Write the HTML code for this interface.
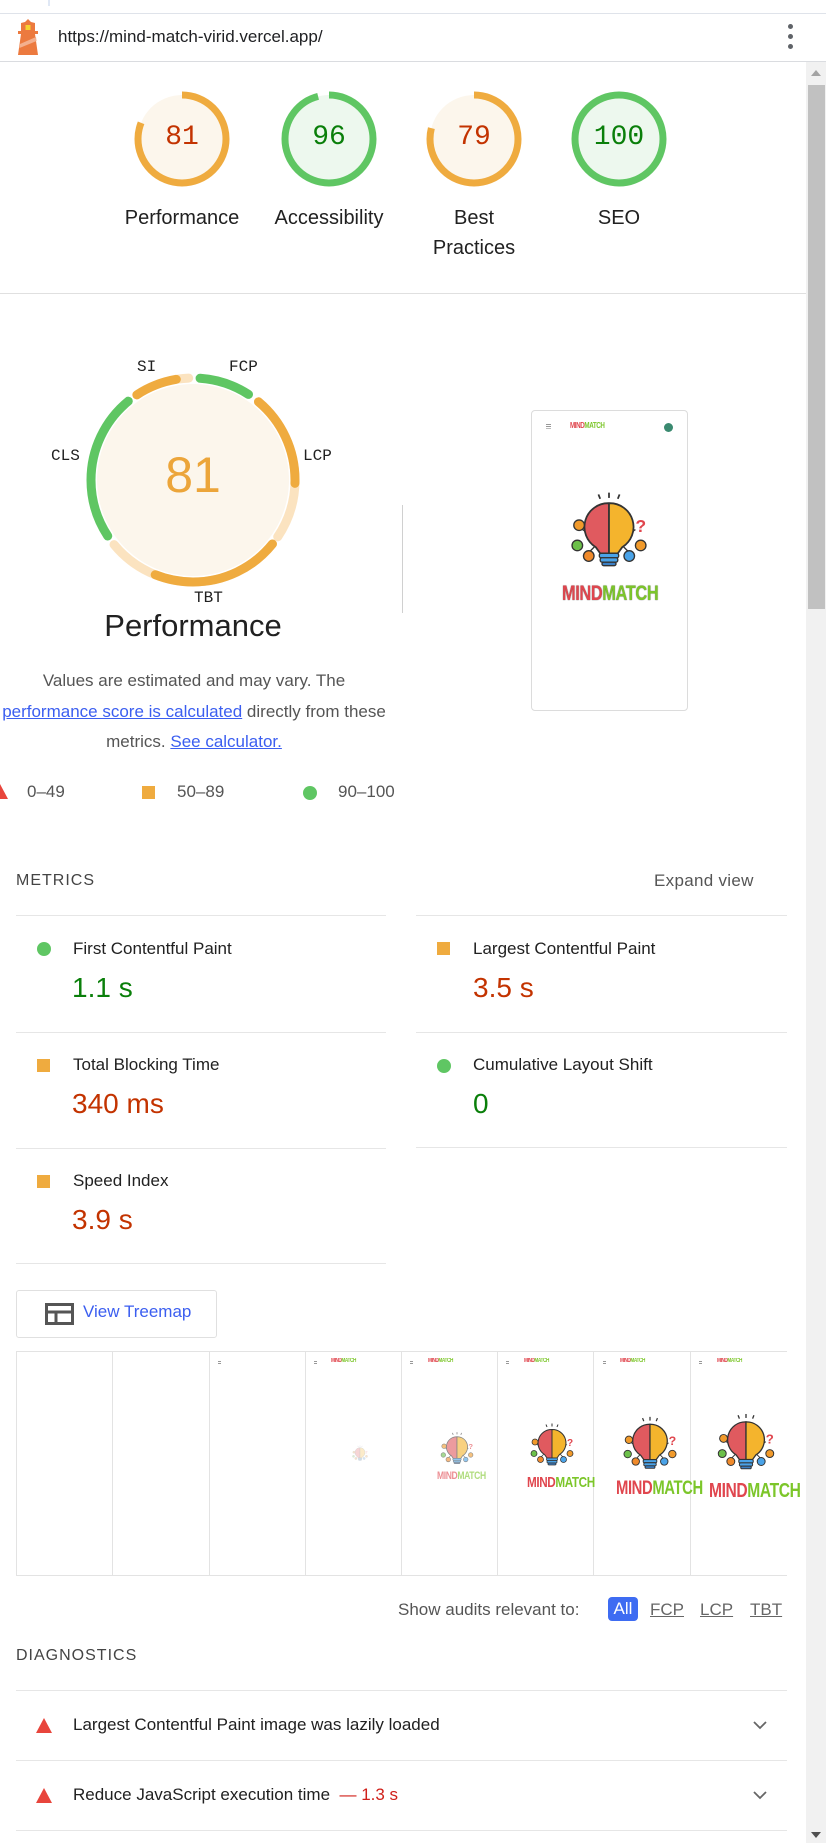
<!DOCTYPE html>
<html><head><meta charset="utf-8">
<style>
*{margin:0;padding:0;box-sizing:border-box}
body{width:826px;height:1843px;overflow:hidden;background:#fff;font-family:"Liberation Sans",Arial,sans-serif;color:#212121;position:relative}
.a{position:absolute}
.lbl{font-size:20px;color:#212121;text-align:center;width:140px}
.gn{font-family:"Liberation Mono",monospace;font-size:28px;text-align:center;width:100px}
.mono{font-family:"Liberation Mono",monospace;font-size:16px;color:#212121}
.hl{height:1px;background:#e6e6e6}
.mt{font-size:17px;color:#212121}
.mv{font-size:28px}
.orange{color:#c33300}
.green{color:#0a7f0a}
.sq{width:13px;height:13px;background:#efab3f}
.dot{width:14px;height:14px;border-radius:50%;background:#5fc663}
.tri{width:0;height:0;border-left:8px solid transparent;border-right:8px solid transparent;border-bottom:15px solid #e8453c}
.frame{position:absolute;top:1351px;height:224px;width:97px;border-right:1px solid #e3e3e3}
.mm{font-weight:bold;font-family:"Liberation Sans Narrow","Liberation Sans",sans-serif;letter-spacing:-0.5px;transform-origin:0 0;transform:scaleX(.78);white-space:nowrap}
.mm .r{color:#e0464e}.mm .g{color:#7cc62a}
</style></head><body>
<svg width="0" height="0" style="position:absolute">
<defs>
<symbol id="bulb" viewBox="0 0 100 100">
<g stroke="#333" stroke-width="1.5">
<line x1="20" y1="45" x2="35" y2="55"/><line x1="80" y1="45" x2="65" y2="55"/><line x1="28" y1="70" x2="38" y2="60"/><line x1="72" y1="70" x2="62" y2="60"/>
</g>
<path d="M50 15 A27 27 0 0 0 35 65 L40 72 L50 72 Z" fill="#e05a5f" stroke="#333" stroke-width="2"/>
<path d="M50 15 A27 27 0 0 1 65 65 L60 72 L50 72 Z" fill="#f4b42d" stroke="#333" stroke-width="2"/>
<rect x="39" y="72" width="22" height="5" rx="2" fill="#4aa3e8" stroke="#333" stroke-width="1.5"/>
<rect x="40" y="77" width="20" height="5" rx="2" fill="#4aa3e8" stroke="#333" stroke-width="1.5"/>
<rect x="42" y="82" width="16" height="4" rx="2" fill="#3b7fc4" stroke="#333" stroke-width="1.5"/>
<circle cx="16" cy="40" r="6" fill="#f19a2b" stroke="#333" stroke-width="1.5"/>
<circle cx="14" cy="63" r="6" fill="#6cc04a" stroke="#333" stroke-width="1.5"/>
<circle cx="27" cy="75" r="6" fill="#f08a2b" stroke="#333" stroke-width="1.5"/>
<circle cx="73" cy="75" r="6" fill="#4aa3e8" stroke="#333" stroke-width="1.5"/>
<circle cx="86" cy="63" r="6" fill="#f19a2b" stroke="#333" stroke-width="1.5"/>
<text x="80" y="48" font-size="20" font-weight="bold" fill="#e0464e" font-family="Liberation Sans">?</text>
<g stroke="#333" stroke-width="2"><line x1="50" y1="3" x2="50" y2="9"/><line x1="38" y1="5" x2="40" y2="10"/><line x1="62" y1="5" x2="60" y2="10"/></g>
</symbol>
</defs>
</svg>

<div class="a" style="left:0;top:13px;width:826px;height:1px;background:#dfe3ea"></div>
<div class="a" style="left:48px;top:0;width:2px;height:6px;background:#e0e8f5"></div>
<svg class="a" style="left:16px;top:19px" width="24" height="36" viewBox="0 0 24 36">
<path d="M9 3 L12 0 L15 3 L19 4 L19 12 L5 12 L5 4 Z" fill="#ec7a3f"/>
<rect x="9.5" y="6" width="5" height="5" fill="#f6d330"/>
<rect x="2" y="12" width="20" height="3" fill="#ec7a3f"/>
<path d="M5 15 L19 15 L22 36 L2 36 Z" fill="#ec7a3f"/>
<path d="M4 25 L20 18 L20.6 22 L3.5 29 Z" fill="#f4b08e"/>
</svg>
<div class="a" style="left:58px;top:27px;font-size:17px;color:#202124">https://mind-match-virid.vercel.app/</div>
<div class="a" style="left:788px;top:24px;width:5px;height:5px;border-radius:50%;background:#5f6368"></div>
<div class="a" style="left:788px;top:34px;width:5px;height:5px;border-radius:50%;background:#5f6368"></div>
<div class="a" style="left:788px;top:44px;width:5px;height:5px;border-radius:50%;background:#5f6368"></div>
<div class="a" style="left:0;top:61px;width:826px;height:1px;background:#dadce0"></div>

<div class="a" style="left:806px;top:62px;width:20px;height:1781px;background:#f1f1f1"></div>
<div class="a" style="left:808px;top:85px;width:17px;height:524px;background:#c1c1c1"></div>
<div class="a" style="left:811px;top:70px;width:0;height:0;border-left:5px solid transparent;border-right:5px solid transparent;border-bottom:6px solid #a3a3a3"></div>
<div class="a" style="left:811px;top:1832px;width:0;height:0;border-left:5px solid transparent;border-right:5px solid transparent;border-top:6px solid #505050"></div>

<svg class="a" style="left:0;top:80px" width="806" height="120">
<g transform="rotate(-90 182 59)"><circle cx="182" cy="59" r="44" fill="#fcf6ec"/><circle cx="182" cy="59" r="44" fill="none" stroke="#efab3f" stroke-width="7" pathLength="100" stroke-dasharray="81 100"/></g>
<g transform="rotate(-90 329 59)"><circle cx="329" cy="59" r="44" fill="#edf8ee"/><circle cx="329" cy="59" r="44" fill="none" stroke="#5fc663" stroke-width="7" pathLength="100" stroke-dasharray="96 100"/></g>
<g transform="rotate(-90 474 59)"><circle cx="474" cy="59" r="44" fill="#fcf6ec"/><circle cx="474" cy="59" r="44" fill="none" stroke="#efab3f" stroke-width="7" pathLength="100" stroke-dasharray="79 100"/></g>
<g><circle cx="619" cy="59" r="44" fill="#edf8ee"/><circle cx="619" cy="59" r="44" fill="none" stroke="#5fc663" stroke-width="7"/></g>
</svg>
<div class="a gn orange" style="left:132px;top:122px">81</div>
<div class="a gn green" style="left:279px;top:122px">96</div>
<div class="a gn orange" style="left:424px;top:122px">79</div>
<div class="a gn green" style="left:569px;top:122px">100</div>
<div class="a lbl" style="left:112px;top:207px">Performance</div>
<div class="a lbl" style="left:259px;top:207px">Accessibility</div>
<div class="a lbl" style="left:404px;top:203px;line-height:30px">Best<br>Practices</div>
<div class="a lbl" style="left:549px;top:207px">SEO</div>
<div class="a" style="left:0;top:293px;width:806px;height:1px;background:#e0e0e0"></div>

<svg class="a" style="left:0;top:360px" width="400" height="240">
<g transform="translate(193 120) rotate(-90)">
<circle r="96" fill="#fcf6ec"/>
<g fill="none" stroke-width="9" stroke-linecap="round">
<circle r="102" stroke="#fbe3c0" pathLength="360" stroke-dasharray="6 354" stroke-dashoffset="8"/>
<circle r="102" stroke="#efab3f" pathLength="360" stroke-dasharray="24 336" stroke-dashoffset="33"/>
<circle r="102" stroke="#5fc663" pathLength="360" stroke-dasharray="29 331" stroke-dashoffset="-4"/>
<circle r="102" stroke="#fbe3c0" pathLength="360" stroke-dasharray="84 276" stroke-dashoffset="-40"/>
<circle r="102" stroke="#efab3f" pathLength="360" stroke-dasharray="52 308" stroke-dashoffset="-40"/>
<circle r="102" stroke="#fbe3c0" pathLength="360" stroke-dasharray="102 258" stroke-dashoffset="-129"/>
<circle r="102" stroke="#efab3f" pathLength="360" stroke-dasharray="73 287" stroke-dashoffset="-129"/>
<circle r="102" stroke="#5fc663" pathLength="360" stroke-dasharray="84 276" stroke-dashoffset="-237"/>
</g>
</g>
</svg>
<div class="a mono" style="left:137px;top:358px">SI</div>
<div class="a mono" style="left:229px;top:358px">FCP</div>
<div class="a mono" style="left:303px;top:447px">LCP</div>
<div class="a mono" style="left:51px;top:447px">CLS</div>
<div class="a mono" style="left:194px;top:589px">TBT</div>
<div class="a" style="left:93px;top:446px;width:200px;text-align:center;font-size:50px;color:#eca53a">81</div>
<div class="a" style="left:63px;top:608px;width:260px;text-align:center;font-size:31px;color:#212121">Performance</div>
<div class="a" style="left:402px;top:505px;width:1px;height:108px;background:#d0d0d0"></div>
<div class="a" style="left:-6px;top:666px;width:400px;text-align:center;font-size:17px;color:#555;line-height:30.5px">Values are estimated and may vary. The<br><span style="color:#3b5ef0;text-decoration:underline">performance score is calculated</span> directly from these<br>metrics. <span style="color:#3b5ef0;text-decoration:underline">See calculator.</span></div>
<div class="a tri" style="left:-8px;top:784px"></div>
<div class="a" style="left:27px;top:782px;font-size:17px;color:#555">0–49</div>
<div class="a sq" style="left:142px;top:786px"></div>
<div class="a" style="left:177px;top:782px;font-size:17px;color:#555">50–89</div>
<div class="a dot" style="left:303px;top:786px"></div>
<div class="a" style="left:338px;top:782px;font-size:17px;color:#555">90–100</div>

<div class="a" style="left:531px;top:410px;width:157px;height:301px;border:1px solid #dcdcdc;border-radius:4px;background:#fff"></div>
<div class="a" style="left:546px;top:424px;width:5px;height:1px;background:#999;box-shadow:0 2px 0 #999,0 4px 0 #bbb"></div>
<div class="a mm" style="left:570px;top:421px;font-size:8px"><span class="r">MIND</span><span class="g">MATCH</span></div>
<div class="a" style="left:664px;top:423px;width:9px;height:9px;border-radius:50%;background:#3a8a70"></div>
<svg class="a" style="left:556px;top:490px" width="106" height="88"><use href="#bulb" width="106" height="88"/></svg>
<div class="a mm" style="left:562px;top:582px;font-size:21px;text-shadow:0 0 1px #333"><span class="r">MIND</span><span class="g">MATCH</span></div>

<div class="a" style="left:16px;top:872px;font-size:16px;letter-spacing:1px;color:#444">METRICS</div>
<div class="a" style="left:654px;top:871px;font-size:17px;color:#555;letter-spacing:.3px">Expand view</div>
<div class="a hl" style="left:16px;top:915px;width:370px"></div>
<div class="a hl" style="left:416px;top:915px;width:371px"></div>
<div class="a hl" style="left:16px;top:1032px;width:370px"></div>
<div class="a hl" style="left:416px;top:1032px;width:371px"></div>
<div class="a hl" style="left:16px;top:1148px;width:370px"></div>
<div class="a hl" style="left:416px;top:1147px;width:371px"></div>
<div class="a hl" style="left:16px;top:1263px;width:370px"></div>

<div class="a dot" style="left:37px;top:942px"></div>
<div class="a mt" style="left:73px;top:939px">First Contentful Paint</div>
<div class="a mv green" style="left:72px;top:972px">1.1 s</div>
<div class="a sq" style="left:437px;top:942px"></div>
<div class="a mt" style="left:473px;top:939px">Largest Contentful Paint</div>
<div class="a mv orange" style="left:473px;top:972px">3.5 s</div>

<div class="a sq" style="left:37px;top:1059px"></div>
<div class="a mt" style="left:73px;top:1055px">Total Blocking Time</div>
<div class="a mv orange" style="left:72px;top:1088px">340 ms</div>
<div class="a dot" style="left:437px;top:1059px"></div>
<div class="a mt" style="left:473px;top:1055px">Cumulative Layout Shift</div>
<div class="a mv green" style="left:473px;top:1088px">0</div>

<div class="a sq" style="left:37px;top:1175px"></div>
<div class="a mt" style="left:73px;top:1171px">Speed Index</div>
<div class="a mv orange" style="left:72px;top:1204px">3.9 s</div>

<div class="a" style="left:16px;top:1290px;width:201px;height:48px;border:1px solid #e0e0e0;border-radius:3px"></div>
<svg class="a" style="left:45px;top:1303px" width="29" height="22" viewBox="0 0 29 22"><rect x="1.5" y="1.5" width="26" height="19" fill="none" stroke="#555" stroke-width="3"/><line x1="1.5" y1="9" x2="27.5" y2="9" stroke="#555" stroke-width="3"/><line x1="11" y1="9" x2="11" y2="20" stroke="#555" stroke-width="3"/></svg>
<div class="a" style="left:83px;top:1302px;font-size:17px;color:#3b5ef0">View Treemap</div>

<div class="a" style="left:16px;top:1351px;width:771px;height:225px;border:1px solid #e3e3e3;border-right:none"></div>
<div class="frame" style="left:16px"></div>
<div class="frame" style="left:113px"></div>
<div class="frame" style="left:209px"></div>
<div class="frame" style="left:305px"></div>
<div class="frame" style="left:401px"></div>
<div class="frame" style="left:497px"></div>
<div class="frame" style="left:594px"></div>
<div class="a" style="left:218px;top:1361px;width:3px;height:1px;background:#999;box-shadow:0 2px 0 #999"></div>
<div class="a" style="left:314px;top:1361px;width:3px;height:1px;background:#999;box-shadow:0 2px 0 #999"></div>
<div class="a" style="left:410px;top:1361px;width:3px;height:1px;background:#999;box-shadow:0 2px 0 #999"></div>
<div class="a" style="left:506px;top:1361px;width:3px;height:1px;background:#999;box-shadow:0 2px 0 #999"></div>
<div class="a" style="left:603px;top:1361px;width:3px;height:1px;background:#999;box-shadow:0 2px 0 #999"></div>
<div class="a" style="left:699px;top:1361px;width:3px;height:1px;background:#999;box-shadow:0 2px 0 #999"></div>
<div class="a mm" style="left:331px;top:1358px;font-size:6px"><span class="r">MIND</span><span class="g">MATCH</span></div>
<div class="a mm" style="left:428px;top:1358px;font-size:6px"><span class="r">MIND</span><span class="g">MATCH</span></div>
<div class="a mm" style="left:524px;top:1358px;font-size:6px"><span class="r">MIND</span><span class="g">MATCH</span></div>
<div class="a mm" style="left:620px;top:1358px;font-size:6px"><span class="r">MIND</span><span class="g">MATCH</span></div>
<div class="a mm" style="left:717px;top:1358px;font-size:6px"><span class="r">MIND</span><span class="g">MATCH</span></div>
<svg class="a" style="left:350px;top:1445px;opacity:.25" width="20" height="18"><use href="#bulb" width="20" height="18"/></svg>
<svg class="a" style="left:434px;top:1431px;opacity:.6" width="46" height="38"><use href="#bulb" width="46" height="38"/></svg>
<div class="a mm" style="left:437px;top:1470px;font-size:11px;opacity:.6"><span class="r">MIND</span><span class="g">MATCH</span></div>
<svg class="a" style="left:522px;top:1422px" width="60" height="50"><use href="#bulb" width="60" height="50"/></svg>
<div class="a mm" style="left:527px;top:1474px;font-size:15px"><span class="r">MIND</span><span class="g">MATCH</span></div>
<svg class="a" style="left:613px;top:1415px" width="74" height="62"><use href="#bulb" width="74" height="62"/></svg>
<div class="a mm" style="left:616px;top:1478px;font-size:19px"><span class="r">MIND</span><span class="g">MATCH</span></div>
<svg class="a" style="left:706px;top:1412px" width="80" height="66"><use href="#bulb" width="80" height="66"/></svg>
<div class="a mm" style="left:709px;top:1480px;font-size:20px"><span class="r">MIND</span><span class="g">MATCH</span></div>

<div class="a" style="left:398px;top:1600px;font-size:17px;color:#555">Show audits relevant to:</div>
<div class="a" style="left:608px;top:1597px;width:30px;height:24px;border-radius:4px;background:#3e6cf2;color:#fff;font-size:17px;text-align:center;line-height:24px">All</div>
<div class="a" style="left:650px;top:1600px;font-size:17px;color:#666;text-decoration:underline">FCP</div>
<div class="a" style="left:700px;top:1600px;font-size:17px;color:#666;text-decoration:underline">LCP</div>
<div class="a" style="left:750px;top:1600px;font-size:17px;color:#666;text-decoration:underline">TBT</div>

<div class="a" style="left:16px;top:1647px;font-size:16px;letter-spacing:1px;color:#444">DIAGNOSTICS</div>
<div class="a hl" style="left:16px;top:1690px;width:771px"></div>
<div class="a tri" style="left:36px;top:1718px"></div>
<div class="a" style="left:73px;top:1715px;font-size:17px">Largest Contentful Paint image was lazily loaded</div>
<svg class="a" style="left:753px;top:1721px" width="14" height="9"><path d="M1 1 L7 7 L13 1" fill="none" stroke="#666" stroke-width="1.8"/></svg>
<div class="a hl" style="left:16px;top:1760px;width:771px"></div>
<div class="a tri" style="left:36px;top:1788px"></div>
<div class="a" style="left:73px;top:1785px;font-size:17px">Reduce JavaScript execution time <span style="color:#d0201a">&nbsp;— 1.3 s</span></div>
<svg class="a" style="left:753px;top:1791px" width="14" height="9"><path d="M1 1 L7 7 L13 1" fill="none" stroke="#666" stroke-width="1.8"/></svg>
<div class="a hl" style="left:16px;top:1830px;width:771px"></div>
</body></html>
